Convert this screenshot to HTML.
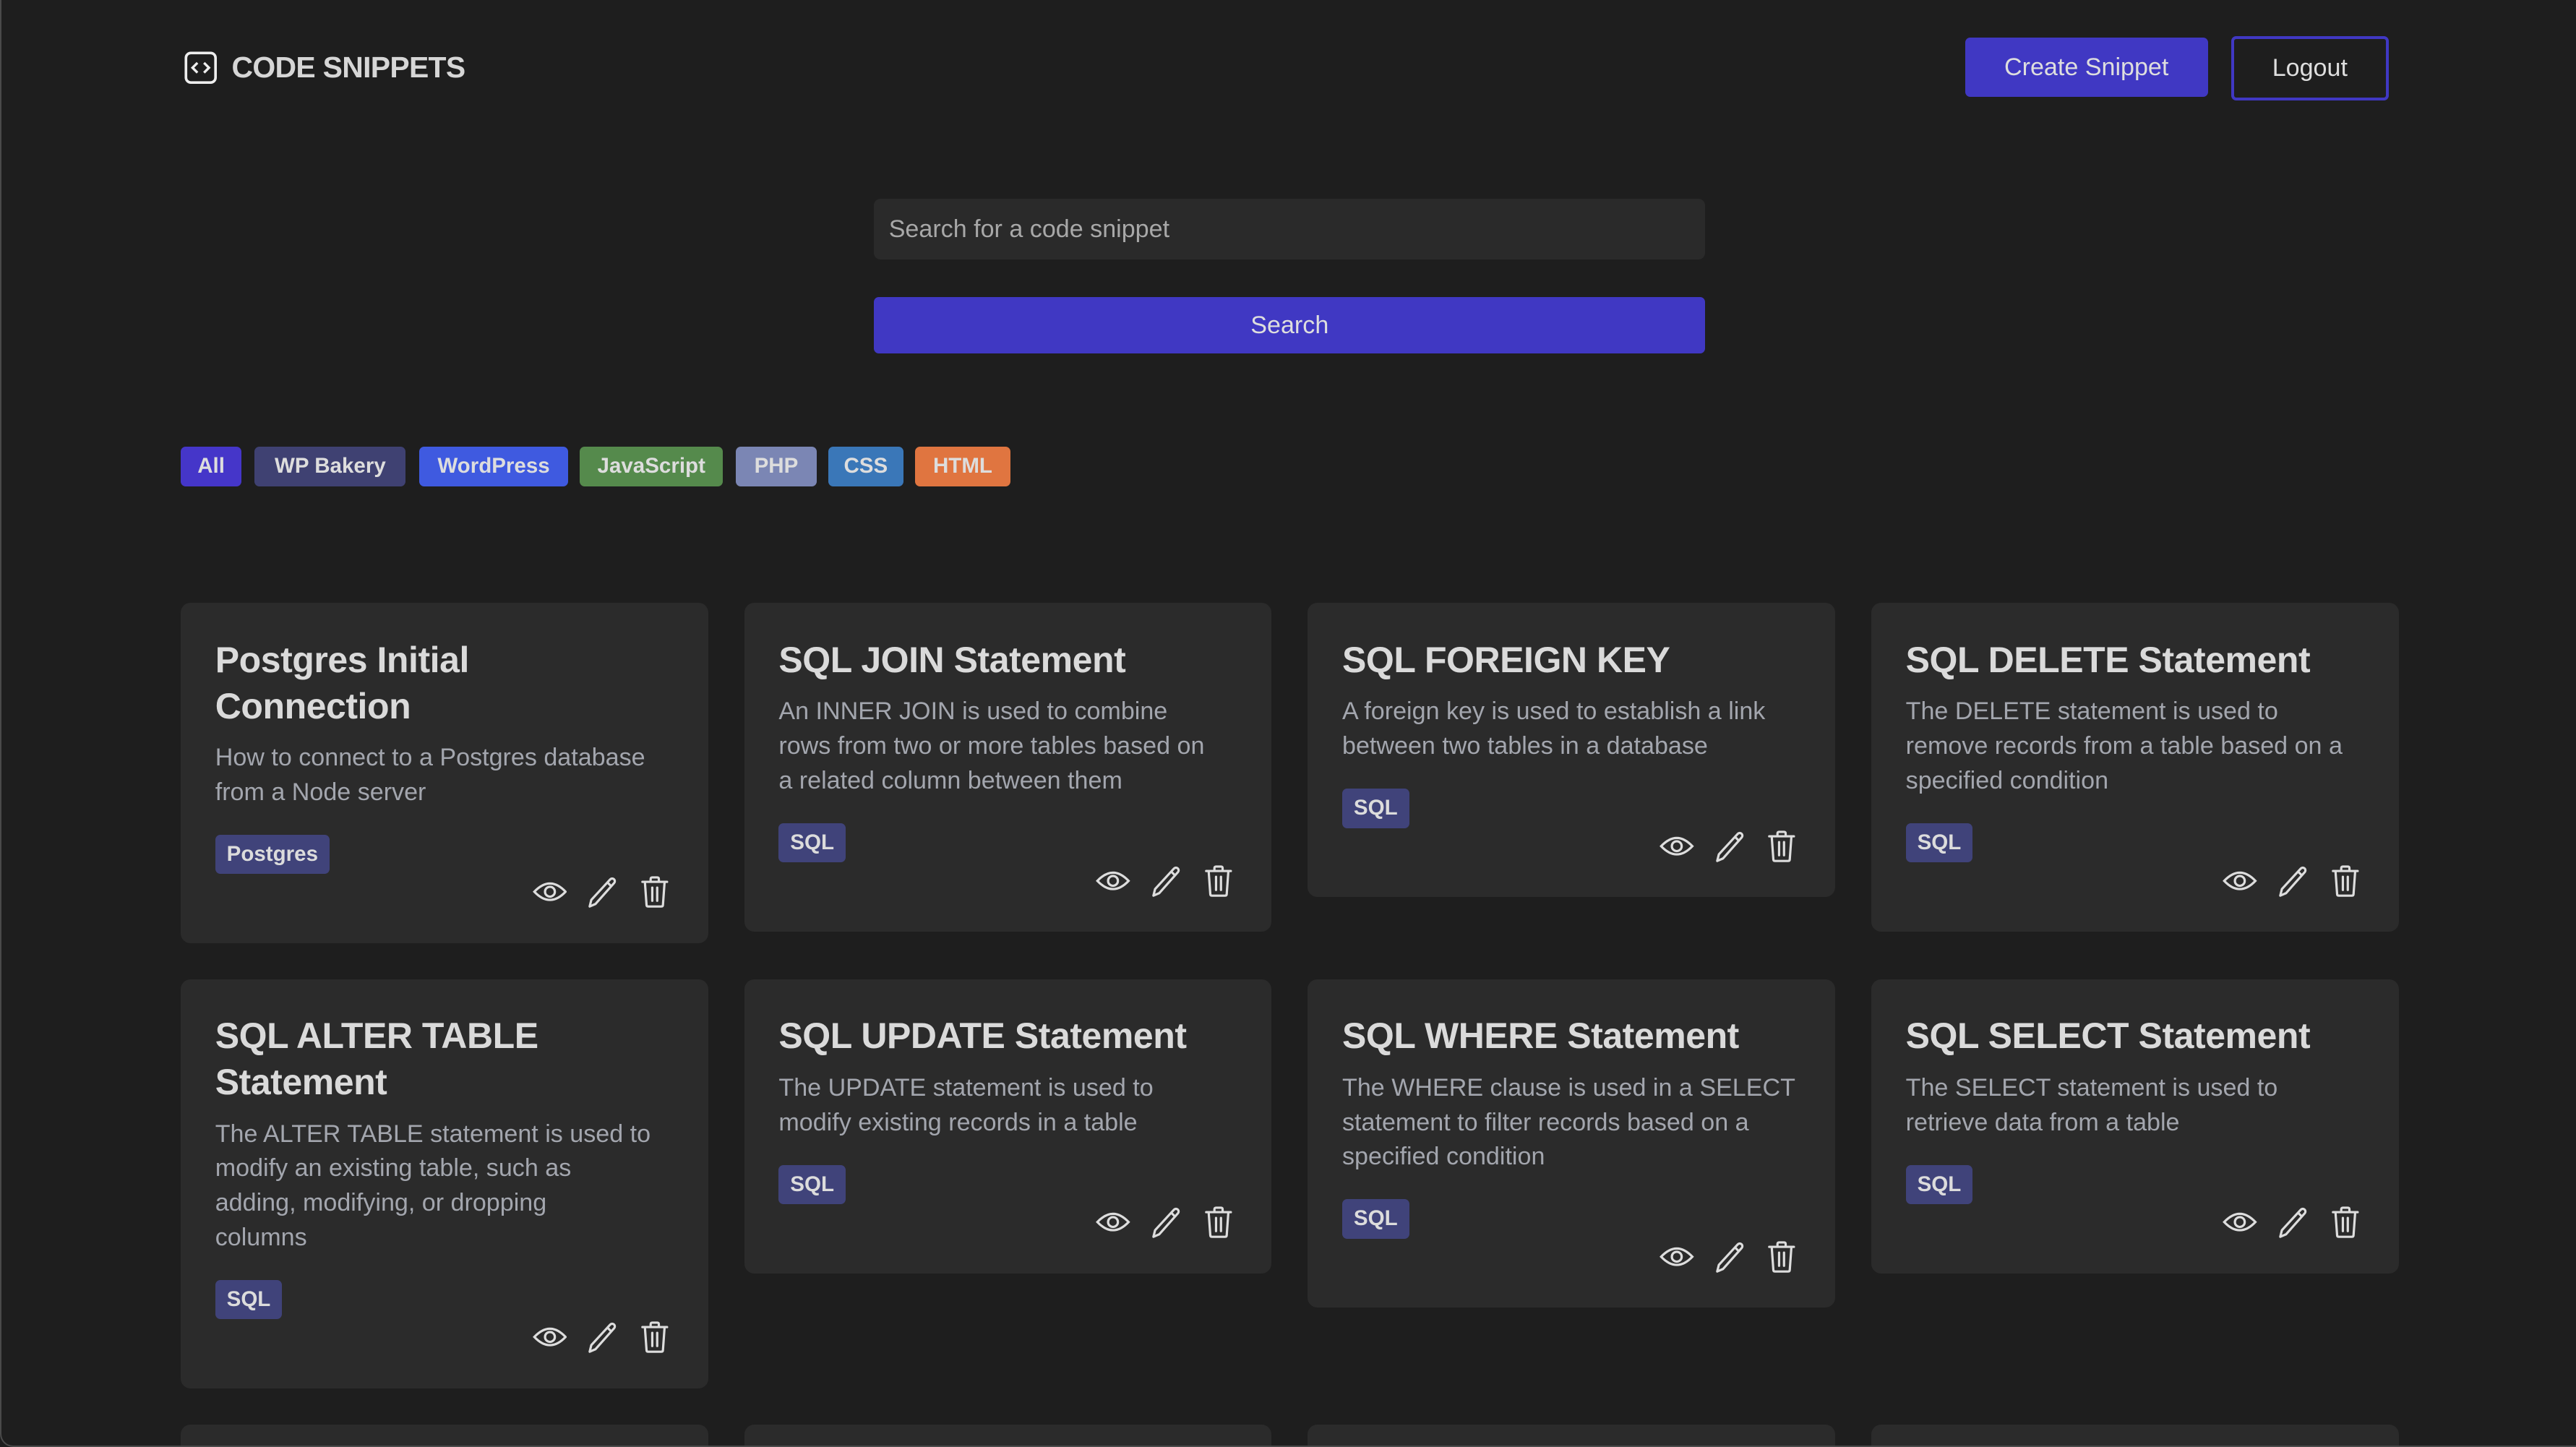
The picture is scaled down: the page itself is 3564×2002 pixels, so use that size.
<!DOCTYPE html>
<html><head><meta charset="utf-8"><style>
html,body{margin:0;padding:0;background:#1e1e1e;overflow:hidden}
body{width:3564px;height:2002px}
#w{zoom:2.2730;width:1568px;height:881px;position:relative;font-family:"Liberation Sans",sans-serif;color:#d6d6d6;overflow:hidden}
#bd{position:absolute;left:0;top:-10px;width:1600px;height:890px;border-left:1px solid #4a4a4a;border-bottom:1px solid #4a4a4a;border-radius:0 0 0 8px;z-index:5;pointer-events:none}
.abs{position:absolute}
.logo{left:112px;top:31px;display:flex;align-items:center;gap:9px;font-weight:bold;font-size:18px;color:#d6d6d6;letter-spacing:-0.3px}
.btn{position:absolute;box-sizing:border-box;display:flex;align-items:center;justify-content:center;font-size:15px;color:#dedede;border-radius:3px}
.inp{left:532px;top:121px;width:506px;height:37px;background:#2a2a2a;border-radius:4px;box-sizing:border-box;padding-left:9px;line-height:37px;font-size:15px;color:#a8a8a8}
.f{position:absolute;top:272px;height:24px;line-height:24px;border-radius:3px;font-size:13px;font-weight:bold;color:#ddd;text-align:center}
.card{position:absolute;width:321px;background:#2b2b2b;border-radius:6px;box-sizing:border-box;padding:21px 21px 21px 21px}
.card h2{margin:0;font-size:22px;line-height:28px;font-weight:bold;color:#dadada;letter-spacing:-0.2px;white-space:nowrap}
.card p{margin:7px 0 0;font-size:15px;line-height:21px;color:#a3a6ae;white-space:nowrap}
.tag{display:inline-block;margin-top:15px;height:24px;line-height:24px;padding:0 7px;border-radius:3px;background:#40437a;color:#dcdcdc;font-size:13px;font-weight:bold}
.ic{margin-top:1px;height:20px;display:flex;justify-content:flex-end;gap:11px;padding-right:1px}
.ic svg{width:21px;height:20px}
</style></head><body><div id="w"><div id="bd"></div>
<div class="abs logo"><svg width="20" height="20" viewBox="0 0 20 20"><rect x="1" y="1" width="18" height="18" rx="3" fill="none" stroke="#eee" stroke-width="1.6"/><path d="M8 7l-3 3 3 3M12 7l3 3-3 3" fill="none" stroke="#eee" stroke-width="1.5"/></svg><span>CODE SNIPPETS</span></div>
<div class="btn" style="left:1196px;top:23px;width:148px;height:36px;background:#4038c3">Create Snippet</div>
<div class="btn" style="left:1358px;top:22px;width:96px;height:39px;border:2px solid #4038c3">Logout</div>
<div class="abs inp">Search for a code snippet</div>
<div class="btn" style="left:532px;top:181px;width:506px;height:34px;background:#4038c3">Search</div>
<div class="f" style="left:110px;width:37px;background:#4536c9">All</div>
<div class="f" style="left:155px;width:92px;background:#3f4172">WP Bakery</div>
<div class="f" style="left:255px;width:91px;background:#3f5ae0">WordPress</div>
<div class="f" style="left:353px;width:87px;background:#558a4c">JavaScript</div>
<div class="f" style="left:448px;width:49px;background:#7b86b4">PHP</div>
<div class="f" style="left:504px;width:46px;background:#3a77b8">CSS</div>
<div class="f" style="left:557px;width:58px;background:#e07540">HTML</div>

<div class="card" style="left:110px;top:367px"><h2>Postgres Initial<br>Connection</h2><p>How to connect to a Postgres database<br>from a Node server</p><span class="tag">Postgres</span><div class="ic"></div></div>
<div class="card" style="left:453px;top:367px"><h2>SQL JOIN Statement</h2><p>An INNER JOIN is used to combine<br>rows from two or more tables based on<br>a related column between them</p><span class="tag">SQL</span><div class="ic"></div></div>
<div class="card" style="left:796px;top:367px"><h2>SQL FOREIGN KEY</h2><p>A foreign key is used to establish a link<br>between two tables in a database</p><span class="tag">SQL</span><div class="ic"></div></div>
<div class="card" style="left:1139px;top:367px"><h2>SQL DELETE Statement</h2><p>The DELETE statement is used to<br>remove records from a table based on a<br>specified condition</p><span class="tag">SQL</span><div class="ic"></div></div>
<div class="card" style="left:110px;top:596px"><h2>SQL ALTER TABLE<br>Statement</h2><p>The ALTER TABLE statement is used to<br>modify an existing table, such as<br>adding, modifying, or dropping<br>columns</p><span class="tag">SQL</span><div class="ic"></div></div>
<div class="card" style="left:453px;top:596px"><h2>SQL UPDATE Statement</h2><p>The UPDATE statement is used to<br>modify existing records in a table</p><span class="tag">SQL</span><div class="ic"></div></div>
<div class="card" style="left:796px;top:596px"><h2>SQL WHERE Statement</h2><p>The WHERE clause is used in a SELECT<br>statement to filter records based on a<br>specified condition</p><span class="tag">SQL</span><div class="ic"></div></div>
<div class="card" style="left:1139px;top:596px"><h2>SQL SELECT Statement</h2><p>The SELECT statement is used to<br>retrieve data from a table</p><span class="tag">SQL</span><div class="ic"></div></div>
<div class="card" style="left:110px;top:867px;height:60px"></div>
<div class="card" style="left:453px;top:867px;height:60px"></div>
<div class="card" style="left:796px;top:867px;height:60px"></div>
<div class="card" style="left:1139px;top:867px;height:60px"></div>
</div>
<script>
var s='<svg viewBox="0 0 21 20"><path d="M1 10Q10.5 0 20 10Q10.5 20 1 10Z" fill="none" stroke="#ddd" stroke-width="1.4"/><circle cx="10.5" cy="10" r="3" fill="none" stroke="#ddd" stroke-width="1.4"/></svg>'+
'<svg viewBox="0 0 21 20"><path d="M3 19l1-4L15.5 2.5a1.6 1.6 0 0 1 2.4 2.2L6.5 17.5Z M14 4.5l2 2" fill="none" stroke="#ddd" stroke-width="1.4" stroke-linejoin="round"/></svg>'+
'<svg viewBox="0 0 21 20"><path d="M3 4h15M8 4V2.3Q8 1.3 9 1.3h3q1 0 1 1V4M4.5 4l1 14q0 1 1 1h8q1 0 1-1l1-14M9 7.5v8M12 7.5v8" fill="none" stroke="#ddd" stroke-width="1.4" stroke-linejoin="round" stroke-linecap="round"/></svg>';
document.querySelectorAll('.ic').forEach(function(e){e.innerHTML=s;});
</script>
</body></html>
